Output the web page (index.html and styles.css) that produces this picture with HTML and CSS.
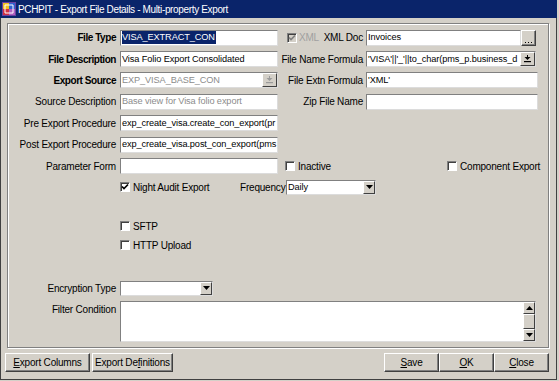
FILE: index.html
```html
<!DOCTYPE html>
<html>
<head>
<meta charset="utf-8">
<link rel="stylesheet" href="styles.css">
</head>
<body>
<div class="window">
  <div class="titlebar">
    <svg class="appicon" width="14" height="14" viewBox="0 0 14 14">
      <rect x="0" y="0" width="14" height="14" fill="#6a3fa0"/>
      <rect x="1" y="1" width="6" height="6" fill="#f0c020"/>
      <rect x="7" y="1" width="6" height="6" fill="#3060d0"/>
      <rect x="1" y="7" width="6" height="6" fill="#d03040"/>
      <rect x="7" y="7" width="6" height="6" fill="#b060c0"/>
      <path d="M3 3h8v8h-8z" fill="none" stroke="#fff" stroke-width="1"/>
    </svg>
    <span class="title">PCHPIT - Export File Details - Multi-property Export</span>
  </div>
  <div class="body">
    <div class="panel">
      <div class="row">
        <div class="lbl b">File Type</div>
        <div class="field"><span class="txt"><span class="sel">VISA_EXTRACT_CON</span></span></div>
        <div class="rlbl xmlgrp">
          <span class="chk dis"><svg width="8" height="8" viewBox="0 0 8 8"><path d="M1 3.5L3 5.5L7 1.5" fill="none" stroke="#808080" stroke-width="1.7"/></svg></span>
          <span class="distxt">XML</span>
          <span class="push">XML Doc</span>
        </div>
        <div class="field w154"><span class="txt">Invoices</span></div>
        <div class="dots"><svg width="9" height="3" viewBox="0 0 9 3"><rect x="1" y="1" width="1" height="1"/><rect x="4" y="1" width="1" height="1"/><rect x="7" y="1" width="1" height="1"/></svg></div>
      </div>
      <div class="row">
        <div class="lbl b">File Description</div>
        <div class="field"><span class="txt">Visa Folio Export Consolidated</span></div>
        <div class="rlbl">File Name Formula</div>
        <div class="field w170"><span class="txt">'VISA'||'_'||to_char(pms_p.business_d</span>
          <span class="cbtn"><svg width="7" height="8" viewBox="0 0 7 8"><rect x="3" y="0" width="1" height="2"/><path d="M0.5 2h6L3.5 5z"/><rect x="0" y="6" width="7" height="1.2"/></svg></span>
        </div>
      </div>
      <div class="row">
        <div class="lbl b">Export Source</div>
        <div class="field"><span class="txt gray">EXP_VISA_BASE_CON</span>
          <span class="cbtn"><svg width="7" height="8" viewBox="0 0 7 8" fill="#9a9a9a"><rect x="3" y="0" width="1" height="2"/><path d="M0.5 2h6L3.5 5z"/><rect x="0" y="6" width="7" height="1.2"/></svg></span>
        </div>
        <div class="rlbl">File Extn Formula</div>
        <div class="field w172"><span class="txt">'XML'</span></div>
      </div>
      <div class="row">
        <div class="lbl">Source Description</div>
        <div class="field"><span class="txt gray">Base view for Visa folio export</span></div>
        <div class="rlbl">Zip File Name</div>
        <div class="field w172"><span class="txt"></span></div>
      </div>
      <div class="row">
        <div class="lbl">Pre Export Procedure</div>
        <div class="field"><span class="txt">exp_create_visa.create_con_export(pr</span></div>
      </div>
      <div class="row">
        <div class="lbl">Post Export Procedure</div>
        <div class="field"><span class="txt">exp_create_visa.post_con_export(pms</span></div>
      </div>
      <div class="row">
        <div class="lbl">Parameter Form</div>
        <div class="field"><span class="txt"></span></div>
        <div class="cbgrp inactive"><span class="chk"></span><span>Inactive</span></div>
        <div class="cbgrp"><span class="chk"></span><span>Component Export</span></div>
      </div>
      <div class="row">
        <div class="lbl"></div>
        <div class="cbgrp night"><span class="chk"><svg width="8" height="8" viewBox="0 0 8 8"><path d="M1 3.5L3 5.5L7 1.5" fill="none" stroke="#000" stroke-width="1.7"/></svg></span><span>Night Audit Export</span></div>
        <div class="freqlbl">Frequency</div>
        <div class="select w90"><span class="txt">Daily</span><span class="sbtn"><svg width="7" height="4" viewBox="0 0 7 4"><path d="M0 0h7L3.5 4z"/></svg></span></div>
      </div>
      <div class="row short sftp">
        <div class="lbl"></div>
        <div class="cbgrp"><span class="chk"></span><span>SFTP</span></div>
      </div>
      <div class="row short">
        <div class="lbl"></div>
        <div class="cbgrp"><span class="chk"></span><span>HTTP Upload</span></div>
      </div>
      <div class="row enc">
        <div class="lbl">Encryption Type</div>
        <div class="select w93"><span class="txt"></span><span class="sbtn"><svg width="7" height="4" viewBox="0 0 7 4"><path d="M0 0h7L3.5 4z"/></svg></span></div>
      </div>
      <div class="row filter">
        <div class="lbl top">Filter Condition</div>
        <div class="textarea">
          <div class="sb">
            <span class="sbb"><svg width="7" height="4" viewBox="0 0 7 4"><path d="M0 4h7L3.5 0z"/></svg></span>
            <span class="thumb"></span>
            <span class="sbb"><svg width="7" height="4" viewBox="0 0 7 4"><path d="M0 0h7L3.5 4z"/></svg></span>
          </div>
        </div>
      </div>
    </div>
    <div class="buttons">
      <div class="btn w85"><span><u>E</u>xport Columns</span></div>
      <div class="btn w81"><span>Export De<u>f</u>initions</span></div>
      <div class="right">
        <div class="btn w55"><span><u>S</u>ave</span></div>
        <div class="btn w55"><span><u>O</u>K</span></div>
        <div class="btn w55"><span><u>C</u>lose</span></div>
      </div>
    </div>
  </div>
</div>
</body>
</html>
```

FILE: styles.css
```css
* { box-sizing: border-box; }
body {
  margin: 0;
  background: #d4d0c8;
  font-family: "Liberation Sans", Arial, sans-serif;
  font-size: 10px;
  color: #000;
}
.window {
  width: 557px;
  height: 380px;
  border: 1px solid #404040;
  border-top: 0;
  background: #d4d0c8;
  display: flex;
  flex-direction: column;
}
.titlebar {
  height: 18px;
  flex: none;
  margin: 0 -1px;
  background: #0a246a;
  color: #fff;
  display: flex;
  align-items: center;
  padding-left: 2px;
}
.appicon { flex: none; margin-right: 2px; }
.title { font-size: 10px; letter-spacing: -0.35px; white-space: nowrap; }
.body { padding: 5px 7px 0 6px; flex: 1; }
.panel {
  height: 325px;
  border: 1px solid #808080;
  box-shadow: inset 1px 1px 0 #fff, 1px 1px 0 #fff;
  padding-top: 3px;
}
.row {
  display: flex;
  align-items: center;
  height: 21.4px;
}
.row.short { height: 19px; }
.row.sftp { margin-top: 18.8px; }
.row.enc { margin-top: 22.8px; }
.row.filter { margin-top: 2.3px; height: auto; align-items: flex-start; }
.lbl {
  width: 112px;
  flex: none;
  text-align: right;
  padding-right: 4px;
  white-space: nowrap;
  letter-spacing: -0.2px;
}
.lbl.b { font-weight: bold; letter-spacing: -0.45px; }
.lbl.top { padding-top: 3px; }
.field {
  flex: none;
  width: 158px;
  height: 16px;
  background: #fff;
  border: 1px solid;
  border-color: #808080 #dcdcdc #dcdcdc #808080;
  display: flex;
  align-items: center;
  overflow: hidden;
}
.field.w154 { width: 155px; }
.field.w170 { width: 170px; }
.field.w172 { width: 172px; }
.txt {
  flex: 1;
  min-width: 0;
  overflow: hidden;
  white-space: nowrap;
  font-size: 9.2px;
  letter-spacing: -0.1px;
  padding-left: 1px;
  line-height: 13px;
}
.txt.gray { color: #8c8c8c; }
.sel { background: #0a246a; color: #fff; display: inline-block; padding-right: 1px; }
.cbtn {
  flex: none;
  width: 15px;
  height: 14px;
  background: #d4d0c8;
  border: 1px solid;
  border-color: #fff #404040 #404040 #fff;
  display: flex;
  align-items: center;
  justify-content: center;
}
.rlbl {
  width: 88px;
  flex: none;
  text-align: right;
  padding-right: 3px;
  white-space: nowrap;
  letter-spacing: -0.2px;
}
.xmlgrp { display: flex; align-items: center; }
.xmlgrp .chk { margin-left: 9px; }
.distxt { color: #a0a0a0; margin-left: 2px; }
.push { margin-left: auto; }
.dots {
  flex: none;
  width: 15px;
  height: 16px;
  background: #d4d0c8;
  border: 1px solid;
  border-color: #fff #404040 #404040 #fff;
  box-shadow: inset -1px -1px 0 #808080;
  display: flex;
  align-items: flex-end;
  justify-content: center;
  padding-bottom: 1px;
}
.chk {
  flex: none;
  width: 10px;
  height: 10px;
  background: #fff;
  border: 1px solid;
  border-color: #808080 #fff #fff #808080;
  box-shadow: inset 1px 1px 0 #404040;
  display: flex;
}
.chk svg { display: block; }
.chk.dis { background: #d4d0c8; }
.cbgrp {
  flex: none;
  display: flex;
  align-items: center;
  white-space: nowrap;
  letter-spacing: -0.2px;
}
.cbgrp .chk { margin-right: 3px; }
.cbgrp.inactive { width: 162px; margin-left: 7px; }
.cbgrp.night { width: 120px; }
.freqlbl {
  width: 46px;
  flex: none;
  text-align: right;
  padding-right: 3px;
  letter-spacing: -0.2px;
}
.select {
  flex: none;
  height: 15px;
  background: #fff;
  border: 1px solid;
  border-color: #808080 #dcdcdc #dcdcdc #808080;
  display: flex;
  align-items: center;
}
.select.w90 { width: 90px; }
.select.w93 { width: 93px; }
.sbtn {
  flex: none;
  width: 12px;
  height: 13px;
  background: #d4d0c8;
  border: 1px solid;
  border-color: #fff #404040 #404040 #fff;
  display: flex;
  align-items: center;
  justify-content: center;
}
.textarea {
  flex: none;
  width: 416px;
  height: 41px;
  background: #fff;
  border: 1px solid;
  border-color: #808080 #dcdcdc #dcdcdc #808080;
  display: flex;
  justify-content: flex-end;
}
.sb {
  width: 12px;
  display: flex;
  flex-direction: column;
  background: #d4d0c8;
}
.sbb, .thumb {
  background: #d4d0c8;
  border: 1px solid;
  border-color: #fff #404040 #404040 #fff;
  display: flex;
  align-items: center;
  justify-content: center;
}
.sbb { height: 12px; flex: none; }
.thumb { flex: 1; }
.buttons {
  display: flex;
  gap: 2px;
  margin: 5px 0 0 -2px;
}
.right { margin-left: auto; display: flex; }
.btn {
  flex: none;
  height: 19px;
  background: #d4d0c8;
  border: 1px solid;
  border-color: #fff #404040 #404040 #fff;
  box-shadow: inset -1px -1px 0 #808080;
  display: flex;
  align-items: center;
  justify-content: center;
  letter-spacing: -0.2px;
  white-space: nowrap;
}
.btn.w85 { width: 85px; }
.btn.w81 { width: 81px; }
.btn.w55 { width: 55px; }
```
